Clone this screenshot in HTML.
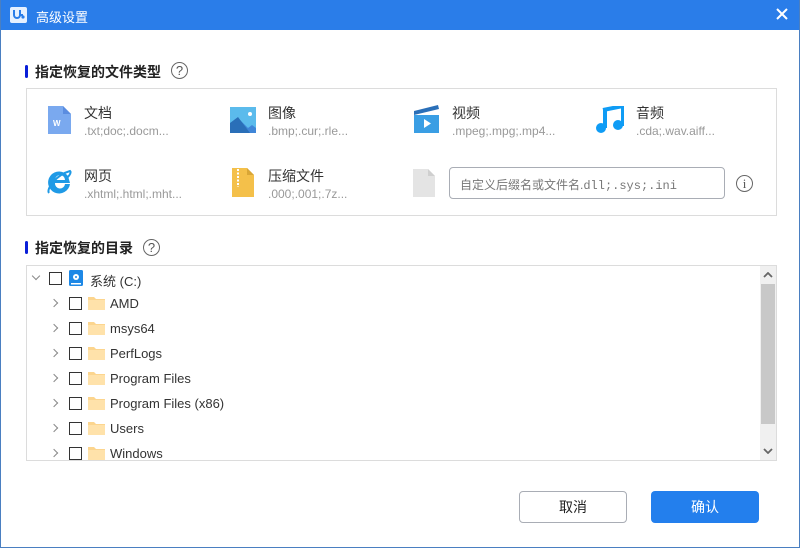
<!DOCTYPE html>
<html><head><meta charset="utf-8"><style>
*{margin:0;padding:0;box-sizing:border-box}
body{width:800px;height:548px;position:relative;overflow:hidden;background:#fff;font-family:"Liberation Sans","Noto Sans CJK SC",sans-serif;color:#333}
.win{position:absolute;left:0;top:0;width:800px;height:548px;background:#fff}
.frame{position:absolute;left:0;top:0;width:800px;height:548px;border:1px solid #4a7fc1;border-top:none;pointer-events:none}
.title{position:absolute;left:0;top:0;width:800px;height:30px;background:#2a7de9;color:#fff;font-size:13px}
.abs{position:absolute}
h3{position:absolute;font-size:14px;font-weight:bold;color:#222;padding-left:10px}
h3:before{content:"";position:absolute;left:0;top:3px;width:3px;height:13px;background:#0a1fd8;border-radius:2px}
.q{position:absolute;width:17px;height:17px;border:1.3px solid #666;border-radius:50%;font-size:13px;text-align:center;line-height:15px;color:#555}
.box{position:absolute;border:1px solid #dcdcdc}
.t{position:absolute;font-size:14px;color:#333}
.s{position:absolute;font-size:12px;color:#999}
.row{position:absolute;height:25px;font-size:13px;color:#333}
.cb{position:absolute;width:13px;height:13px;border:1px solid #333;background:#fff}
.chev{position:absolute;width:6px;height:6px;border-right:1.5px solid #888;border-bottom:1.5px solid #888;transform:rotate(-45deg)}
.fold{position:absolute;width:17px;height:14px}
.btn{position:absolute;width:108px;height:32px;border-radius:4px;font-size:14px;text-align:center;line-height:30px}
</style></head><body>
<div class="win">
<div class="title">
 <svg class="abs" style="left:10px;top:7px" width="17" height="16" viewBox="0 0 17 16"><rect x="0" y="0" width="17" height="16" rx="2" fill="#e6f0ff"/><path d="M4 3v5a3 3 0 0 0 6 0V3M10 8h3" stroke="#2a7de9" stroke-width="2" fill="none"/><circle cx="13" cy="10" r="1.6" fill="#2a7de9"/></svg>
 <div class="abs" style="left:36px;top:7px">高级设置</div>
 <svg class="abs" style="left:776px;top:8px" width="12" height="12"><path d="M1 1L11 11M11 1L1 11" stroke="#fff" stroke-width="2"/></svg>
</div>

<h3 style="left:25px;top:62px">指定恢复的文件类型</h3>
<div class="q" style="left:171px;top:62px">?</div>
<div class="box" style="left:26px;top:88px;width:751px;height:128px"></div>

<svg class="abs" style="left:48px;top:106px" width="23" height="28" viewBox="0 0 23 28"><path d="M0 0h15l8 8v20H0z" fill="#7aa9ef"/><path d="M15 0l8 8h-8z" fill="#5b8de0"/><text x="5" y="20" font-size="8" fill="#fff" font-weight="bold" font-family="Liberation Sans">W</text></svg>
<div class="t" style="left:84px;top:103px">文档</div>
<div class="s" style="left:84px;top:124px">.txt;doc;.docm...</div>
<svg class="abs" style="left:230px;top:107px" width="26" height="26" viewBox="0 0 26 26"><rect width="26" height="26" fill="#5bbbec"/><path d="M0 18l8-7 10 10 4-3 4 3v5H0z" fill="#3f86d8"/><path d="M0 16l8-6 12 16H0z" fill="#2a6fb8"/><circle cx="20" cy="7" r="2" fill="#fff"/></svg>
<div class="t" style="left:268px;top:103px">图像</div>
<div class="s" style="left:268px;top:124px">.bmp;.cur;.rle...</div>
<svg class="abs" style="left:414px;top:105px" width="26" height="28" viewBox="0 0 26 28"><path d="M0 6l24-6 1 4L0 10z" fill="#2a6fb8"/><rect x="0" y="10" width="25" height="18" fill="#3a9ee4"/><path d="M10 14v9l7-4.5z" fill="#fff"/></svg>
<div class="t" style="left:452px;top:103px">视频</div>
<div class="s" style="left:452px;top:124px">.mpeg;.mpg;.mp4...</div>
<svg class="abs" style="left:596px;top:106px" width="28" height="28" viewBox="0 0 28 28"><path d="M7 4l20-4v20" stroke="#0f9cf5" stroke-width="4" fill="none"/><circle cx="5" cy="22" r="5" fill="#0f9cf5"/><circle cx="22" cy="19" r="5" fill="#0f9cf5"/><rect x="7" y="3" width="4" height="19" fill="#0f9cf5"/></svg>
<div class="t" style="left:636px;top:103px">音频</div>
<div class="s" style="left:636px;top:124px">.cda;.wav.aiff...</div>

<svg class="abs" style="left:46px;top:169px" width="27" height="27" viewBox="0 0 27 27"><path d="M24 14H9a5 5 0 0 0 10 1h5a11 11 0 1 1-2-8M9 11h10a5 5 0 0 0-10 0" fill="#1f9ae6" fill-rule="evenodd"/><path d="M3 24C0 20 10 6 24 2c2 2-2 6-4 8" stroke="#1f9ae6" stroke-width="2" fill="none"/></svg>
<div class="t" style="left:84px;top:166px">网页</div>
<div class="s" style="left:84px;top:187px">.xhtml;.html;.mht...</div>
<svg class="abs" style="left:232px;top:168px" width="22" height="29" viewBox="0 0 22 29"><path d="M0 0h15l7 7v22H0z" fill="#f4c04a"/><path d="M15 0l7 7h-7z" fill="#d9a636"/><path d="M6 1v18" stroke="#fff" stroke-width="2" stroke-dasharray="2 1.5"/></svg>
<div class="t" style="left:268px;top:166px">压缩文件</div>
<div class="s" style="left:268px;top:187px">.000;.001;.7z...</div>
<svg class="abs" style="left:413px;top:169px" width="22" height="28" viewBox="0 0 22 28"><path d="M0 0h15l7 7v21H0z" fill="#e4e4e4"/><path d="M15 0l7 7h-7z" fill="#cfcfcf"/></svg>
<div class="abs" style="left:449px;top:167px;width:276px;height:32px;border:1px solid #a9adb5;border-radius:4px;font-size:12px;color:#777;padding:8px 10px">自定义后缀名或文件名.<span style="font-family:'Liberation Mono',monospace">dll;.sys;.ini</span></div>
<div class="q" style="left:736px;top:175px;font-family:'Liberation Serif',serif">i</div>

<h3 style="left:25px;top:238px">指定恢复的目录</h3>
<div class="q" style="left:143px;top:239px">?</div>
<div class="box" style="left:26px;top:265px;width:751px;height:196px;overflow:hidden">
 <div class="abs" style="left:733px;top:0;width:16px;height:194px;background:#f0f0f0"></div>
 <div class="abs" style="left:734px;top:18px;width:14px;height:140px;background:#c8c8c8"></div>
 <svg class="abs" style="left:736px;top:6px" width="10" height="6"><path d="M1 5L5 1 9 5" stroke="#666" stroke-width="1.8" fill="none"/></svg>
 <svg class="abs" style="left:736px;top:182px" width="10" height="6"><path d="M1 1L5 5 9 1" stroke="#666" stroke-width="1.8" fill="none"/></svg>
</div>
<div class="chev" style="left:33px;top:273px;transform:rotate(45deg)"></div>
<div class="cb" style="left:49px;top:272px"></div>
<svg class="abs" style="left:69px;top:270px" width="14" height="16" viewBox="0 0 14 16"><rect width="14" height="16" rx="1.5" fill="#1d88e6"/><circle cx="7" cy="7" r="3" fill="#fff"/><circle cx="7" cy="7" r="1" fill="#1d88e6"/><rect x="2" y="13" width="10" height="1.5" fill="#fff"/></svg>
<div class="row" style="left:90px;top:271px">系统 (C:)</div>

<div class="chev" style="left:51px;top:300px"></div><div class="cb" style="left:69px;top:297px"></div><svg class="fold" style="left:88px;top:296px" viewBox="0 0 17 14"><path d="M0 1h6l2 2h9v11H0z" fill="#fcd58e"/><rect y="4" width="17" height="10" fill="#ffe2aa"/></svg><div class="row" style="left:110px;top:296px">AMD</div>
<div class="chev" style="left:51px;top:325px"></div><div class="cb" style="left:69px;top:322px"></div><svg class="fold" style="left:88px;top:321px" viewBox="0 0 17 14"><path d="M0 1h6l2 2h9v11H0z" fill="#fcd58e"/><rect y="4" width="17" height="10" fill="#ffe2aa"/></svg><div class="row" style="left:110px;top:321px">msys64</div>
<div class="chev" style="left:51px;top:350px"></div><div class="cb" style="left:69px;top:347px"></div><svg class="fold" style="left:88px;top:346px" viewBox="0 0 17 14"><path d="M0 1h6l2 2h9v11H0z" fill="#fcd58e"/><rect y="4" width="17" height="10" fill="#ffe2aa"/></svg><div class="row" style="left:110px;top:346px">PerfLogs</div>
<div class="chev" style="left:51px;top:375px"></div><div class="cb" style="left:69px;top:372px"></div><svg class="fold" style="left:88px;top:371px" viewBox="0 0 17 14"><path d="M0 1h6l2 2h9v11H0z" fill="#fcd58e"/><rect y="4" width="17" height="10" fill="#ffe2aa"/></svg><div class="row" style="left:110px;top:371px">Program Files</div>
<div class="chev" style="left:51px;top:400px"></div><div class="cb" style="left:69px;top:397px"></div><svg class="fold" style="left:88px;top:396px" viewBox="0 0 17 14"><path d="M0 1h6l2 2h9v11H0z" fill="#fcd58e"/><rect y="4" width="17" height="10" fill="#ffe2aa"/></svg><div class="row" style="left:110px;top:396px">Program Files (x86)</div>
<div class="chev" style="left:51px;top:425px"></div><div class="cb" style="left:69px;top:422px"></div><svg class="fold" style="left:88px;top:421px" viewBox="0 0 17 14"><path d="M0 1h6l2 2h9v11H0z" fill="#fcd58e"/><rect y="4" width="17" height="10" fill="#ffe2aa"/></svg><div class="row" style="left:110px;top:421px">Users</div>
<div class="chev" style="left:51px;top:450px"></div><div class="cb" style="left:69px;top:447px"></div><svg class="fold" style="left:88px;top:446px" viewBox="0 0 17 14"><path d="M0 1h6l2 2h9v11H0z" fill="#fcd58e"/><rect y="4" width="17" height="10" fill="#ffe2aa"/></svg><div class="row" style="left:110px;top:446px">Windows</div>
<div class="abs" style="left:27px;top:460px;width:749px;height:30px;background:#fff"></div>
<div class="abs" style="left:26px;top:460px;width:751px;height:1px;background:#dcdcdc"></div>

<div class="btn" style="left:519px;top:491px;border:1px solid #a9adb5;color:#222">取消</div>
<div class="btn" style="left:651px;top:491px;background:#237fed;color:#fff;line-height:32px">确认</div>
</div>
<div class="frame"></div>
</body></html>
